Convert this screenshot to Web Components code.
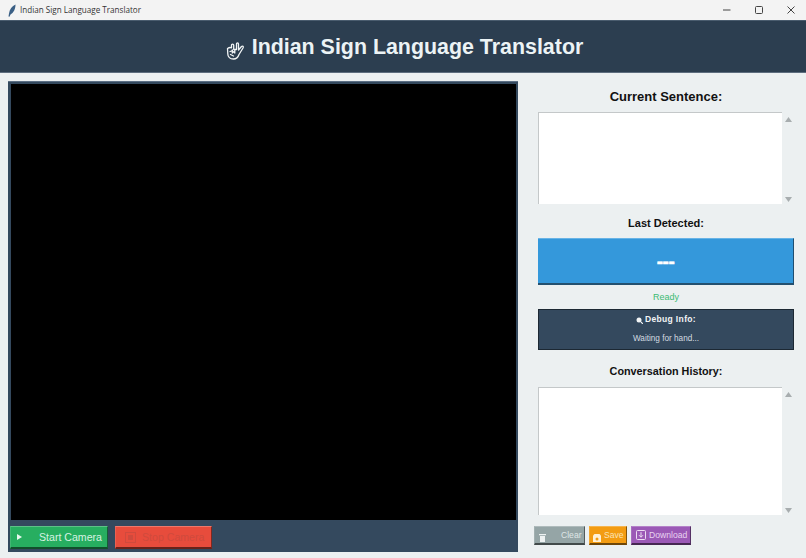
<!DOCTYPE html>
<html><head><meta charset="utf-8">
<style>
html,body{margin:0;padding:0;width:806px;height:558px;overflow:hidden;background:#ecf0f1;font-family:"Liberation Sans",Arial,sans-serif}
body{display:flex;flex-direction:column}
</style></head><body>
<isl-titlebar>Indian Sign Language Translator</isl-titlebar>
<isl-header>Indian Sign Language Translator</isl-header>
<isl-main>
  <isl-video slot="left">
    <isl-button slot="controls" bg="#27ae60" w="98" h="23" fg="#d6f2e2" fs="10.6" gap="17" pad="6">
      <svg slot="icon" width="5" height="6" viewBox="0 0 5 6"><path d="M0 0l5 3-5 3z" fill="#e8f8ee"/></svg>Start Camera</isl-button>
    <isl-button slot="controls" bg="#e74c3c" w="97" h="23" fg="#cf4a3d" fs="10.6" gap="6" pad="9">
      <svg slot="icon" width="11" height="11" viewBox="0 0 11 11"><rect x=".5" y=".5" width="10" height="10" fill="none" stroke="#cf4a3d"/><rect x="3" y="3" width="5" height="5" fill="#cf4a3d"/></svg>Stop Camera</isl-button>
  </isl-video>
  <isl-side slot="right">
    <isl-heading fs="13" h="30" pt="0" pb="1">Current Sentence:</isl-heading>
    <isl-textbox h="92"></isl-textbox>
    <isl-heading fs="11" h="34" pt="3" pb="0">Last Detected:</isl-heading>
    <isl-detected>---</isl-detected>
    <isl-status>Ready</isl-status>
    <isl-debug title-text="Debug Info:">Waiting for hand...</isl-debug>
    <isl-heading fs="10.8" h="37" pt="5" pb="0">Conversation History:</isl-heading>
    <isl-textbox h="128"></isl-textbox>
    <isl-actions>
      <isl-button bg="#95a5a6" w="51" h="19" fg="#dfe6e6" fs="8.6" gap="15" pad="4">
        <svg slot="icon" width="7" height="9" viewBox="0 0 7 9" style="margin-top:5px"><path d="M0 1h7v1.300H0zM1 3h5v6H1z" fill="#eef2f2"/></svg>Clear</isl-button>
      <isl-button bg="#f39c12" w="38" h="19" fg="#fbe3b4" fs="8.6" gap="3" pad="3">
        <svg slot="icon" width="8" height="8" viewBox="0 0 8 8" style="margin-top:5px"><path d="M0 1.500 1.500 0h5L8 1.500V8H0z" fill="#fff1d6"/><circle cx="4" cy="5" r="1.500" fill="#f39c12"/></svg>Save</isl-button>
      <isl-button bg="#9b59b6" w="60" h="19" fg="#e8d3f1" fs="8.6" gap="3" pad="4">
        <svg slot="icon" width="10" height="10" viewBox="0 0 10 10"><rect x=".5" y=".5" width="9" height="9" rx="1" fill="none" stroke="#ecdcf3"/><path d="M5 2.200v5M3 5.200l2 2 2-2" fill="none" stroke="#ecdcf3"/></svg>Download</isl-button>
    </isl-actions>
  </isl-side>
</isl-main>
<script>
function def(name,css,html,init){
  customElements.define(name,class extends HTMLElement{
    constructor(){super();const r=this.attachShadow({mode:'open'});r.innerHTML='<style>'+css+'</style>'+html;}
    connectedCallback(){if(init)init(this);}
  });
}
def('isl-titlebar',`
:host{display:flex;align-items:center;height:20px;background:#f3f3f3;flex:none;padding-left:8px;font:8.100px "Open Sans","Noto Sans",sans-serif;color:#333}
.ic{width:8px;height:13px;margin-right:4px;display:block}
.t{flex:1;padding-bottom:1px}
.w{width:32px;height:20px;display:flex;align-items:center;justify-content:center;position:relative;left:1px}
.w svg{display:block}
`,`<svg class="ic" viewBox="0 0 8 13"><path d="M7.500 .5C4 2 1.500 5.500 1 9.500L.5 12.500l1 .2L2.500 10.500C5.500 9 7.500 5 7.500 .5z" fill="#3a5f85"/></svg>
<span class="t"><slot></slot></span>
<span class="w"><svg width="10" height="10" viewBox="0 0 10 10"><path d="M1 5h7.500" stroke="#444" stroke-width="1"/></svg></span>
<span class="w"><svg width="10" height="10" viewBox="0 0 10 10"><rect x="1.500" y="1.500" width="7" height="7" rx="1" fill="none" stroke="#444"/></svg></span>
<span class="w"><svg width="10" height="10" viewBox="0 0 10 10"><path d="M1.500 1.500l7 7M8.500 1.500l-7 7" stroke="#444"/></svg></span>`);
def('isl-header',`
:host{display:flex;align-items:center;justify-content:center;height:53px;flex:none;box-sizing:border-box;background:#2c3e50;border-top:1px solid #4a5c6e;border-bottom:1px solid #5d6d7e;color:#ecf3f5;font:bold 21.400px "Liberation Sans",Arial,sans-serif;gap:8px;padding-left:3px;padding-top:2px}
svg{display:block;margin-top:5px}
`,`<svg width="18" height="19" viewBox="0 0 18 19" fill="none" stroke="#f2f5f6" stroke-width="1.300" stroke-linejoin="round" stroke-linecap="round"><path d="M1.500 7.500C3 6.500 4.500 6.300 5.500 6.800V4C5.500 2.700 7.600 2.700 7.700 4V8.500H10.500V3C10.500 1.500 12.500 1.500 12.500 3V9L15.500 5.500C16.500 4.500 17.800 5.600 17 7L13 13.500C12 16.500 10 18 7.500 18 4 18 1.800 16 1.800 13z"/><path d="M4 10.500c1.500-.7 3-.3 4 .8M4.500 13.500l3 1.500M6.300 9v3M8.800 9v3"/></svg><span><slot></slot></span>`);
def('isl-main',`
:host{display:flex;flex:1;min-height:0;padding:8px 0 6px 8px;gap:9px}
`,`<slot name="left"></slot><slot name="right"></slot>`);
def('isl-video',`
:host{display:flex;flex-direction:column;width:510px;flex:none;box-sizing:border-box;background:#34495e;padding:2px 2px 3px 3px;border-top:1px solid #5d7085}
.v{flex:1;background:#000}
.c{display:flex;gap:7px;height:23px;margin:6px 0 0 -1px}
`,`<div class="v"></div><div class="c"><slot name="controls"></slot></div>`);
def('isl-side',`
:host{display:flex;flex-direction:column;flex:none;width:271px;padding-left:3px;box-sizing:border-box;margin-top:1px}
`,`<slot></slot>`);
def('isl-heading',`
:host{display:flex;align-items:center;justify-content:center;width:256px;margin-left:8px;font-weight:bold;color:#111;box-sizing:border-box;flex:none}
`,`<slot></slot>`,el=>{const s=el.style,a=n=>el.getAttribute(n);s.fontSize=a('fs')+'px';s.height=a('h')+'px';s.paddingTop=a('pt')+'px';s.paddingBottom=a('pb')+'px';});
def('isl-textbox',`
:host{display:flex;width:256px;margin-left:8px;flex:none}
.b{flex:1;background:#fff;border-top:1px solid #c4c8c9;border-left:1px solid #c4c8c9;box-sizing:border-box}
.s{width:12px;display:flex;flex-direction:column;justify-content:space-between;align-items:center;padding:5px 0 2px;box-sizing:border-box}
svg{display:block}
`,`<div class="b"></div><div class="s"><svg width="7" height="5" viewBox="0 0 7 5"><path d="M3.500 0L7 5H0z" fill="#a8adaf"/></svg><svg width="7" height="5" viewBox="0 0 7 5"><path d="M0 0h7L3.500 5z" fill="#a8adaf"/></svg></div>`,el=>{el.style.height=el.getAttribute('h')+'px';});
def('isl-detected',`
:host{display:flex;align-items:center;justify-content:center;width:256px;height:47px;margin-left:8px;flex:none;box-sizing:border-box;background:#3498db;border-top:1px solid #67b3e6;border-right:1px solid #1f4e70;border-bottom:2px solid #24506f;color:#fff;font-weight:bold;font-size:19px;letter-spacing:-.5px;padding-top:2px;-webkit-text-stroke:.5px #fff}
`,`<slot></slot>`);
def('isl-status',`
:host{display:flex;align-items:center;justify-content:center;width:256px;height:24px;margin-left:8px;flex:none;color:#3dbb73;font-size:9px;box-sizing:border-box}
`,`<slot></slot>`);
def('isl-debug',`
:host{display:flex;flex-direction:column;align-items:center;width:256px;height:41px;margin-left:8px;flex:none;box-sizing:border-box;background:#34495e;border:1px solid #1c2833;color:#d3dbe0;font-size:8.200px}
.h{display:flex;align-items:center;gap:2px;height:20px;margin-top:-1px;color:#f2f5f6;font-weight:bold;font-size:8.500px;letter-spacing:.35px}
.m{margin-top:2px;height:15px;display:flex;align-items:center}
svg{display:block;margin-top:3px}
`,`<div class="h"><svg width="7" height="7" viewBox="0 0 7 7"><circle cx="3" cy="3" r="2.500" fill="#f2f5f6"/><path d="M5 5l2 2" stroke="#f2f5f6" stroke-width="1.200"/></svg><span id="t"></span></div><div class="m"><slot></slot></div>`,el=>{el.shadowRoot.getElementById('t').textContent=el.getAttribute('title-text');});
def('isl-actions',`
:host{display:flex;gap:4px;margin-top:11px;margin-left:4px;height:19px}
`,`<slot></slot>`);
def('isl-button',`
:host{display:flex;align-items:center;flex:none;box-sizing:border-box;border-top:1px solid rgba(255,255,255,.25);border-left:1px solid rgba(255,255,255,.12);border-right:1px solid rgba(0,0,0,.45);border-bottom:2px solid rgba(0,0,0,.55);white-space:nowrap;overflow:hidden}
::slotted(svg){display:block;flex:none}
`,`<slot name="icon"></slot><span id="l"><slot></slot></span>`,el=>{
  const a=n=>el.getAttribute(n),s=el.style;
  s.background=a('bg');s.width=a('w')+'px';s.height=a('h')+'px';s.color=a('fg');s.fontSize=a('fs')+'px';s.paddingLeft=a('pad')+'px';
  el.shadowRoot.getElementById('l').style.marginLeft=a('gap')+'px';
});
</script>
</isl-main>
</body></html>
